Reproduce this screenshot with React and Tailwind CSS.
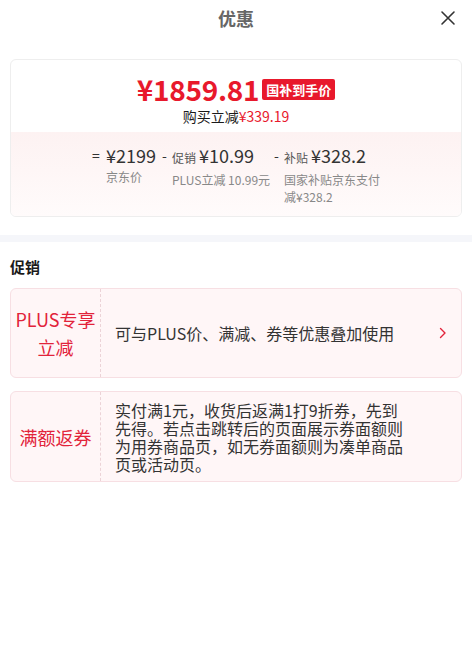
import React from 'react';

export default function App() {
  return (
    <div className="w-[472px] h-[647px] bg-white text-[#1a1a1a] font-['Noto_Sans_CJK_SC',_'Noto_Sans',_sans-serif]">
      {/* Header */}
      <div className="h-[36px] flex items-center justify-between px-[16px]">
        <div className="w-[16px]" />
        <h1 className="text-[18px] leading-[24px] font-bold text-[#666]">优惠</h1>
        <svg width="16" height="16" viewBox="0 0 16 16" className="text-[#333]">
          <path d="M2 2 L14 14 M14 2 L2 14" stroke="currentColor" strokeWidth="1.6" strokeLinecap="round" />
        </svg>
      </div>

      {/* Price card */}
      <div className="px-[10px] pt-[23px]">
        <div className="border border-[#eeeeee] rounded-[6px] overflow-hidden">
          <div className="h-[72px] pt-[15px] flex flex-col items-center">
            <div className="flex items-center gap-[3px] h-[28px]">
              <span className="block text-[28px] leading-[28px] font-bold text-[#e8192c] tracking-[-0.3px]">¥1859.81</span>
              <span className="block bg-[#e8192c] text-white text-[13px] leading-[21px] font-bold px-[4px] rounded-[2px] mt-[1px]">国补到手价</span>
            </div>
            <p className="text-[14px] leading-[18px] mt-[4px] text-[#1a1a1a]">
              购买立减<span className="text-[#e8192c]">¥339.19</span>
            </p>
          </div>
          <div className="h-[84px] bg-gradient-to-b from-[#fdf2f2] to-[#fffbfb] pt-[10px] flex justify-center">
            <div className="flex">
              <div className="w-[70px] flex">
                <span className="text-[14px] leading-[26px] text-[#333] w-[14px]">=</span>
                <div className="flex flex-col">
                  <span className="text-[18px] leading-[26px] text-[#333]">¥2199</span>
                  <span className="text-[12px] leading-[18px] text-[#888]">京东价</span>
                </div>
              </div>
              <div className="w-[112px] flex">
                <span className="text-[14px] leading-[26px] text-[#333] w-[10px]">-</span>
                <div className="flex flex-col">
                  <div className="flex items-baseline gap-[3px]">
                    <span className="text-[12px] leading-[26px] text-[#555]">促销</span>
                    <span className="text-[18px] leading-[26px] text-[#333]">¥10.99</span>
                  </div>
                  <span className="text-[12px] leading-[18px] text-[#888] whitespace-nowrap">PLUS立减 10.99元</span>
                </div>
              </div>
              <div className="w-[106px] flex">
                <span className="text-[14px] leading-[26px] text-[#333] w-[10px]">-</span>
                <div className="flex flex-col w-[96px]">
                  <div className="flex items-baseline gap-[3px]">
                    <span className="text-[12px] leading-[26px] text-[#555]">补贴</span>
                    <span className="text-[18px] leading-[26px] text-[#333]">¥328.2</span>
                  </div>
                  <span className="text-[12px] leading-[17px] text-[#888]">国家补贴京东支付减¥328.2</span>
                </div>
              </div>
            </div>
          </div>
        </div>
      </div>

      {/* Divider band */}
      <div className="h-[7px] bg-[#f5f6fa] mt-[18px]" />

      {/* Promotions */}
      <div className="px-[10px] pt-[15px]">
        <h2 className="text-[15px] leading-[20px] font-bold text-[#1a1a1a]">促销</h2>
        <div className="mt-[11px] flex flex-col gap-[13px]">
          <div className="h-[90px] flex bg-[#fff6f7] border border-[#f7dfe3] rounded-[6px]">
            <div className="w-[90px] shrink-0 border-r border-dashed border-[#ecd3d7] flex items-center justify-center">
              <span className="text-[18px] leading-[28px] text-[#e2233a] text-center">PLUS专享<br />立减</span>
            </div>
            <div className="flex-1 flex items-center pl-[14px] pr-[14px]">
              <span className="flex-1 text-[16px] leading-[20px] text-[#333]">可与PLUS价、满减、券等优惠叠加使用</span>
              <svg width="8" height="12" viewBox="0 0 8 12" className="text-[#e2233a]">
                <path d="M1.5 1.5 L6 6 L1.5 10.5" fill="none" stroke="currentColor" strokeWidth="1.4" strokeLinecap="round" strokeLinejoin="round" />
              </svg>
            </div>
          </div>
          <div className="h-[91px] flex bg-[#fff6f7] border border-[#f7dfe3] rounded-[6px]">
            <div className="w-[90px] shrink-0 border-r border-dashed border-[#ecd3d7] flex items-center justify-center">
              <span className="text-[18px] leading-[28px] text-[#e2233a] text-center">满额返券</span>
            </div>
            <div className="flex-1 flex items-center pl-[14px]">
              <span className="w-[292px] text-[16px] leading-[18px] text-[#333]">实付满1元，收货后返满1打9折券，先到先得。若点击跳转后的页面展示券面额则为用券商品页，如无券面额则为凑单商品页或活动页。</span>
            </div>
          </div>
        </div>
      </div>
    </div>
  );
}
